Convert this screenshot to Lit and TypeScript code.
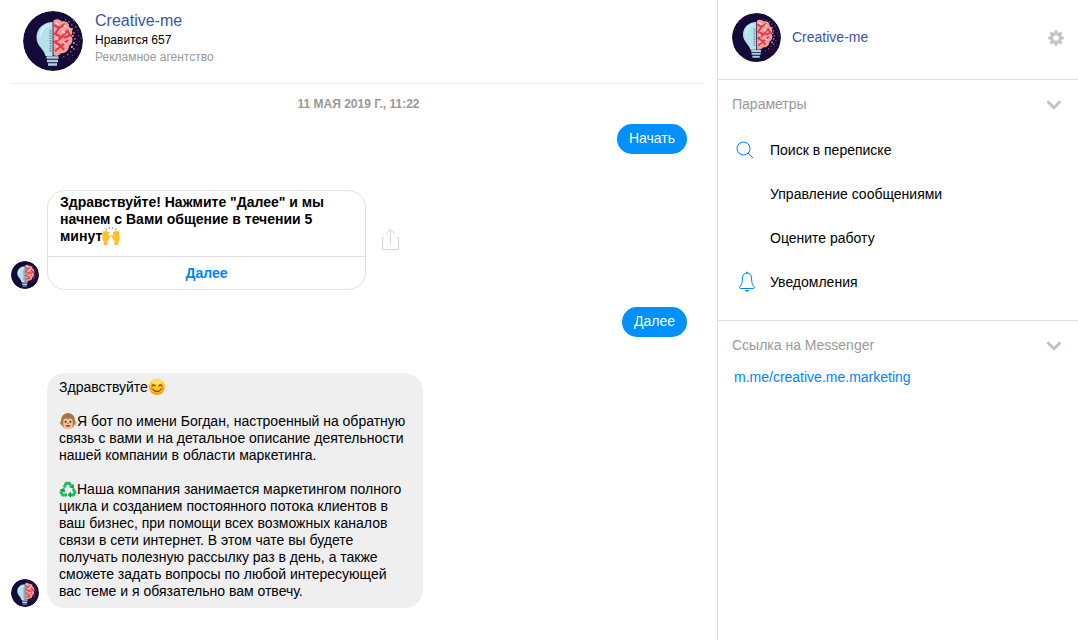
import { LitElement, html, svg, css, nothing } from "lit";
import { customElement, property } from "lit/decorators.js";

const SPECKS: [number, number, number, string][] = [
  [45, 10, 1.6, "#d8536a"], [48, 13, 1.5, "#a83358"], [50, 9, 1, "#e2788a"], [42, 8, 1.4, "#b04464"],
  [52, 15, 1.6, "#c9405c"], [48, 17, 1.8, "#f1a0a4"], [54, 19, 1, "#8d2e58"], [50, 21, 1.8, "#e8586a"],
  [55, 24, 1.2, "#b93b5b"], [51, 27, 1.8, "#d34a60"], [56, 30, 1, "#8d2e58"], [50, 31, 1.8, "#ef7f86"],
  [53, 33, 1.4, "#b93b5b"], [50, 37, 1.8, "#d34a60"], [47, 40, 1.6, "#9a3156"], [54, 38, 1, "#76264e"],
  [44, 43, 1.5, "#c9405c"], [49, 44, 1, "#8d2e58"], [40, 45, 1.4, "#a83358"], [45, 47, 1, "#76264e"],
  [38, 6, 1, "#8d2e58"], [57, 27, 0.9, "#d34a60"], [48, 35, 1.8, "#f7b3b3"], [49, 24, 1.6, "#f7b3b3"],
];

@customElement("page-avatar")
export class PageAvatar extends LitElement {
  static styles = css`
    :host { display: block; flex: none; width: 28px; height: 28px; }
    :host([size="large"]) { width: 60px; height: 60px; }
    :host([size="medium"]) { width: 49px; height: 49px; }
    svg { display: block; width: 100%; height: 100%; border-radius: 50%; }
  `;
  @property({ reflect: true }) size = "small";

  render() {
    return html`<svg viewBox="0 0 60 60" role="img" aria-label="Creative-me">
      <circle cx="30" cy="30" r="30" fill="#150b38" />
      <path d="M30 11C20 11 13.500 18 13.500 26.500C13.500 35 21 38 22.500 45H30Z" fill="#b5e2ea" />
      <path d="M17 26c0-6 4-11 9-12" stroke="#d5f1f4" stroke-width="2" fill="none" />
      <path d="M27.500 19v22" stroke="#6b93a4" stroke-width="2" stroke-dasharray="1.500 1" />
      <path d="M30 10C33 7 37 8 39 10.500C43 9 47 13 46 16C50 18 50 22 48 25C51 28 49 33 46 35C46 40 41 43 38 42C35 46 32 45 30 44Z" fill="#f2a09d" />
      <path d="M31 14l5 3 6-4M36 17l-4 6 7 3 6-7M39 26l-7 5 6 4 7-6M38 35l-6 5M44 19l3 5-6 3M38 35l3 4" stroke="#e2394a" stroke-width="2.200" fill="none" />
      <path d="M33 12l3 2M39 20l3 2M33 27l2 2M40 31l3 2M33 35l2 1M41 14l2 2" stroke="#ffe3dc" stroke-width="1.500" fill="none" />
      ${SPECKS.map(([x, y, s, c]) => svg`<rect x=${x} y=${y} width=${s} height=${s} fill=${c} />`)}
      <path d="M30 10v36" stroke="#3a2b52" stroke-width="1" />
      <path d="M23.500 46.500h12M24 50h11M25 53.500h9" stroke="#a9d3df" stroke-width="2.400" />
    </svg>`;
  }
}

const ICONS = {
  hands: svg`
    <path d="M4.600 2.800l-.8-1.200M7.300 1.600V.4M10.700 1.600V.4M13.400 2.800l.8-1.200" stroke="#555" stroke-width=".9" />
    <path d="M1.800 17.500c.3-2-.9-3.200-1.300-5.300C.2 10.500.3 7.500.9 4.600c.3-1 1.300-.8 1.300.2L3 4c.4-.8 1.400-.5 1.400.3.600-.7 1.500-.3 1.400.6.800-.3 1.300.3 1.200 1.100L6.700 9l.6-.7c.8-.6 1.700.1 1.300 1-.6 1.700-1.700 3.200-2.800 4.400-.5 1.200-.3 2.400-.2 3.800z" fill="#fcc32c" />
    <path d="M16.200 17.500c-.3-2 .9-3.200 1.300-5.300.3-1.700.2-4.700-.4-7.600-.3-1-1.300-.8-1.300.2L15 4c-.4-.8-1.400-.5-1.400.3-.6-.7-1.500-.3-1.400.6-.8-.3-1.300.3-1.200 1.100l.3 3-.6-.7c-.8-.6-1.700.1-1.300 1 .6 1.700 1.700 3.200 2.800 4.400.5 1.200.3 2.400.2 3.800z" fill="#fcc32c" />
    <path d="M2.300 5v3M4.200 4.800V8M15.700 5v3M13.800 4.800V8" stroke="#eda624" stroke-width=".4" />
    <path d="M1.800 17.300h3.800M12.400 17.300h3.800" stroke="#eda624" stroke-width=".8" />`,
  smile: svg`
    <circle cx="9" cy="9" r="8" fill="#ffc928" />
    <path d="M1.500 11.500a8 8 0 0 0 15 0c-3 4-12 4-15 0z" fill="#f6a31c" />
    <ellipse cx="9" cy="4" rx="5" ry="2.200" fill="#ffe268" />
    <circle cx="3.700" cy="10.500" r="1.600" fill="#f98d3c" /><circle cx="14.300" cy="10.500" r="1.600" fill="#f98d3c" />
    <path d="M4 8c.7-1.600 2.300-1.600 3 0M11 8c.7-1.600 2.300-1.600 3 0M5 11.500c2 2.600 6 2.600 8 0" stroke="#6b3d0c" stroke-width="1.200" stroke-linecap="round" fill="none" />`,
  monkey: svg`
    <circle cx="2.500" cy="11" r="2" fill="#d9a06e" /><circle cx="15.500" cy="11" r="2" fill="#d9a06e" />
    <path d="M9 1C4.500 1 2 5 2 9s2 8 7 8 7-4 7-8-2.500-8-7-8z" fill="#a5764a" />
    <path d="M9 7.500C7.500 5.700 4.200 6.500 4.200 9.500c0 1.500.2 2.200 0 3.200C4.300 15.500 6.500 17.200 9 17.200s4.700-1.700 4.800-4.500c-.2-1 0-1.700 0-3.200C13.800 6.500 10.500 5.700 9 7.500z" fill="#f2c595" />
    <circle cx="6.600" cy="9.800" r="1" fill="#3c2414" /><circle cx="11.400" cy="9.800" r="1" fill="#3c2414" />
    <path d="M8.200 11.500h1.600" stroke="#8a5a35" stroke-width=".8" />
    <path d="M6.500 13h5c-.5 2.600-4.500 2.600-5 0z" fill="#b8323c" />`,
  recycle: svg`
    <g fill="none" stroke="#1fbf5c" stroke-width="2.900">
      <path d="M5 7.600l2.200-4.400h3.200l1.500 2.600" /><path d="M14 8.700l2 3.600-1.600 2.700h-3.600" /><path d="M8 15H3.700l-1.700-2.700 1.600-2.700" />
    </g>
    <path d="M14.800 3.700v5.100l-4.600-1.500zM12 11.500v6.500l-3.300-3.200zM.7 9.700l4.600-1.700 1 4.800z" fill="#169c46" />`,
};

const emoji = (name: keyof typeof ICONS, label: string) =>
  html`<svg class="emoji" viewBox="0 0 18 18" role="img" aria-label=${label}>${ICONS[name]}</svg>`;

const chevron = html`<svg class="chevron" viewBox="0 0 16 10" aria-hidden="true">
  <path d="M1.500 1.200L8 7.700l6.500-6.500" fill="none" stroke="#bec2c9" stroke-width="2.800" />
</svg>`;

const searchIcon = html`<svg class="icon" viewBox="0 0 18 18" aria-hidden="true">
  <g fill="none" stroke="#0084ff"><circle cx="7.500" cy="7.500" r="6.500" /><path d="M12 12l5 5" /></g>
</svg>`;

const bellIcon = html`<svg class="icon" viewBox="0 0 18 22" aria-hidden="true">
  <path d="M9 2C6 2 4.600 4.200 4.500 7c-.2 4.500-.8 7-2.600 8.800-.8.900-.4 1.700.5 1.700h13.200c.9 0 1.300-.8.500-1.700C14.300 14 13.700 11.500 13.500 7 13.400 4.200 12 2 9 2z" fill="none" stroke="#0084ff" />
  <path d="M8.200 2V.8h1.600V2zM7 19h4c-.2 2.200-3.800 2.200-4 0z" fill="#0084ff" />
</svg>`;

const gearIcon = html`<svg class="gear" viewBox="0 0 16 16" aria-hidden="true">
  <g fill="#c4c4c4">
    ${[0, 45, 90, 135].map((a) => svg`<path d="M6.700 .2h2.600l.7 3.800v8l-.7 3.800H6.700L6 12V4z" transform="rotate(${a} 8 8)" />`)}
    <circle cx="8" cy="8" r="5.800" />
  </g>
  <circle cx="8" cy="8" r="2.800" fill="#fff" />
</svg>`;

const ACTIONS = [
  { label: "Поиск в переписке", icon: searchIcon },
  { label: "Управление сообщениями" },
  { label: "Оцените работу" },
  { label: "Уведомления", icon: bellIcon, tall: true },
];

@customElement("app-root")
export class AppRoot extends LitElement {
  static styles = css`
    :host {
      display: flex;
      min-height: 100vh;
      background: #fff;
      color: #000;
      font: 14px/17px "Liberation Sans", Arial, sans-serif;
    }
    * { box-sizing: border-box; }
    h1, h2, p { margin: 0; font-size: 14px; font-weight: 400; }
    a { text-decoration: none; }
    button { margin: 0; padding: 0; border: 0; background: none; font: inherit; color: inherit; text-align: left; cursor: pointer; }
    svg { display: block; }

    .chat { flex: 1; min-width: 0; }
    .page-head { display: flex; gap: 12px; margin: 0 14px 0 11px; padding: 11px 12px 12px; border-bottom: 1px solid #ebebeb; }
    .page-name { font-size: 16px; line-height: 20px; }
    .page-name a, .side-name { color: #3a55a4; }
    .likes, .category { font-size: 12px; line-height: 17px; }
    .likes { padding-top: 1px; }
    .category { color: #999; }
    .date { padding: 12px 0; font-size: 12px; line-height: 16px; font-weight: 700; color: #999; text-align: center; text-transform: uppercase; }

    .log { display: flex; flex-direction: column; padding: 0 30px 15px 11px; }
    .sent { align-self: flex-end; padding: 6px 12px 7px; border-radius: 15px; background: #0090ff; color: #fff; }
    .received { display: flex; align-items: flex-end; gap: 8px; margin: 36px 0 17px; }
    .received page-avatar { margin-bottom: 1px; }
    .card { width: 319px; border: 1px solid #e1e1e1; border-radius: 18px; overflow: hidden; }
    .card-text { padding: 3px 12px 11px; font-weight: 700; }
    .card-action { display: block; width: 100%; border-top: 1px solid #e1e1e1; line-height: 32px; font-weight: 700; color: #0084ff; text-align: center; }
    .share { align-self: center; margin-left: 8px; }
    .share svg { width: 18px; height: 22px; }
    .bubble { width: 376px; padding: 6px 12px 8px; border-radius: 18px; background: #efefef; }
    .bubble p + p { margin-top: 17px; }
    .emoji { display: inline-block; width: 18px; height: 18px; margin: -4px 0 -2px; vertical-align: -2px; }

    .side { flex: 0 0 361px; border-left: 1px solid #dedede; }
    .side-head { display: flex; align-items: center; gap: 11px; height: 80px; padding: 0 14px 4px; border-bottom: 1px solid #dedede; }
    .side-name { flex: 1; }
    .gear { width: 16px; height: 16px; }
    .section { padding: 16px 16px 16px 14px; }
    .section + .section { border-top: 1px solid #dedede; }
    .section-head { display: flex; width: 100%; justify-content: space-between; align-items: center; color: #999; }
    .chevron { width: 16px; height: 10px; }
    .actions { margin: 15px 0 0; padding: 0; list-style: none; }
    .action { display: flex; align-items: center; gap: 14px; width: 100%; height: 44px; }
    .slot { flex: 0 0 24px; padding-left: 4px; }
    .slot.tall { padding-left: 6px; }
    .icon { width: 18px; height: 18px; }
    .tall .icon { height: 22px; }
    .link { display: block; padding: 15px 2px; color: #0084ff; }
  `;

  render() {
    return html`
      <main class="chat">
        <header class="page-head">
          <page-avatar size="large"></page-avatar>
          <div>
            <h1 class="page-name"><a href="#page">Creative-me</a></h1>
            <p class="likes">Нравится 657</p>
            <p class="category">Рекламное агентство</p>
          </div>
        </header>
        <p class="date">11 мая 2019 г., 11:22</p>
        <div class="log">
          <p class="sent">Начать</p>
          <div class="received">
            <page-avatar></page-avatar>
            <div class="card">
              <p class="card-text">Здравствуйте! Нажмите "Далее" и мы начнем с Вами общение в течении 5 минут${emoji("hands", "Поднятые руки")}</p>
              <button class="card-action">Далее</button>
            </div>
            <button class="share" aria-label="Поделиться">
              <svg viewBox="0 0 18 22">
                <path d="M2 8.500H.5v12h16v-12H15" fill="none" stroke="#d4d4d4" />
                <path d="M8.500 15V1M4 5l4.500-4.500L13 5" fill="none" stroke="#d9d9d9" />
              </svg>
            </button>
          </div>
          <p class="sent">Далее</p>
          <div class="received">
            <page-avatar></page-avatar>
            <div class="bubble">
              <p>Здравствуйте${emoji("smile", "Улыбка")}</p>
              <p>${emoji("monkey", "Обезьяна")}Я бот по имени Богдан, настроенный на обратную связь с вами и на детальное описание деятельности нашей компании в области маркетинга.</p>
              <p>${emoji("recycle", "Переработка")}Наша компания занимается маркетингом полного цикла и созданием постоянного потока клиентов в ваш бизнес, при помощи всех возможных каналов связи в сети интернет. В этом чате вы будете получать полезную рассылку раз в день, а также сможете задать вопросы по любой интересующей вас теме и я обязательно вам отвечу.</p>
            </div>
          </div>
        </div>
      </main>
      <aside class="side">
        <header class="side-head">
          <page-avatar size="medium"></page-avatar>
          <a class="side-name" href="#page">Creative-me</a>
          <button aria-label="Настройки">${gearIcon}</button>
        </header>
        <section class="section">
          <h2><button class="section-head" aria-expanded="true">Параметры ${chevron}</button></h2>
          <ul class="actions">
            ${ACTIONS.map((a) => html`<li><button class="action"><span class="slot ${a.tall ? "tall" : ""}">${a.icon ?? nothing}</span>${a.label}</button></li>`)}
          </ul>
        </section>
        <section class="section">
          <h2><button class="section-head" aria-expanded="true">Ссылка на Messenger ${chevron}</button></h2>
          <a class="link" href="#messenger">m.me/creative.me.marketing</a>
        </section>
      </aside>
    `;
  }
}
